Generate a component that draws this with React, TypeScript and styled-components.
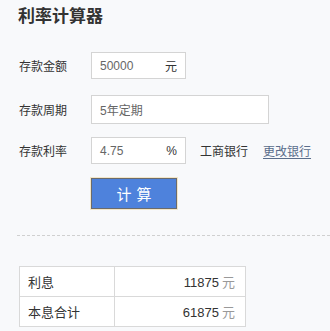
import React from "react";
import styled, { createGlobalStyle } from "styled-components";

const Global = createGlobalStyle`
  html, body { margin: 0; padding: 0; background: #f8f9fb; }
  body { font-family: "Liberation Sans", "Noto Sans CJK SC", sans-serif; color: #333; }
`;

const Page = styled.div`
  width: 330px;
  height: 331px;
  overflow: hidden;
  padding-top: 6px;
  box-sizing: border-box;
`;

const Title = styled.h1`
  margin: 0 0 0 18px;
  font-size: 17px;
  line-height: 22px;
  font-weight: bold;
  color: #333;
`;

const Form = styled.div`
  display: flex;
  flex-direction: column;
  padding-left: 19px;
  margin-top: 24px;
`;

const Row = styled.div<{ $mb: number }>`
  display: flex;
  align-items: center;
  margin-bottom: ${(p) => p.$mb}px;
`;

const Label = styled.div`
  width: 72px;
  font-size: 12px;
  color: #333;
`;

const Field = styled.div<{ $w: number; $h: number }>`
  width: ${(p) => p.$w}px;
  height: ${(p) => p.$h}px;
  box-sizing: border-box;
  border: 1px solid #d4d4d4;
  background: #fff;
  display: flex;
  align-items: center;
  justify-content: space-between;
  padding: 0 8px 0 8px;
  font-size: 12px;
  color: #666;
`;

const Unit = styled.span`
  color: #333;
  font-size: 12px;
`;

const Bank = styled.span`
  margin-left: 14px;
  font-size: 12px;
  color: #333;
`;

const Link = styled.a`
  margin-left: 15px;
  font-size: 12px;
  color: #5a6d8b;
  text-decoration: underline;
  text-underline-offset: 2px;
`;

const Button = styled.button`
  margin-left: 72px;
  width: 86px;
  height: 31px;
  box-sizing: border-box;
  border: 1px solid #6b6b6b;
  box-shadow: 0 0 0 1px #f3e6c8;
  background: #4e82dc;
  color: #fff;
  font-family: "Liberation Sans", "Noto Sans CJK SC", sans-serif;
  font-size: 15px;
  letter-spacing: 5px;
  padding: 0 0 0 5px;
  cursor: pointer;
`;

const Divider = styled.div`
  margin: 26px 0 0 17px;
  border-top: 1px dashed #d0d0d0;
`;

const Table = styled.table`
  margin: 30px 0 0 19px;
  border-collapse: collapse;
  width: 227px;
  background: #fff;
  font-size: 13px;
`;

const Cell = styled.td<{ $right?: boolean }>`
  border: 1px solid #d9d9d9;
  height: 29px;
  padding: 0 ${(p) => (p.$right ? "10px" : "8px")};
  text-align: ${(p) => (p.$right ? "right" : "left")};
  width: ${(p) => (p.$right ? "auto" : "78px")};
  color: #333;
`;

const Yuan = styled.span`
  color: #999;
  margin-left: 3px;
`;

export default function App() {
  return (
    <Page>
      <Global />
      <Title>利率计算器</Title>
      <Form>
        <Row $mb={16}>
          <Label>存款金额</Label>
          <Field $w={95} $h={27}>
            <span>50000</span>
            <Unit>元</Unit>
          </Field>
        </Row>
        <Row $mb={13}>
          <Label>存款周期</Label>
          <Field $w={178} $h={29}>
            <span>5年定期</span>
          </Field>
        </Row>
        <Row $mb={14}>
          <Label>存款利率</Label>
          <Field $w={95} $h={27}>
            <span>4.75</span>
            <Unit>%</Unit>
          </Field>
          <Bank>工商银行</Bank>
          <Link>更改银行</Link>
        </Row>
        <Button>计算</Button>
      </Form>
      <Divider />
      <Table>
        <tbody>
          <tr>
            <Cell>利息</Cell>
            <Cell $right>
              11875<Yuan>元</Yuan>
            </Cell>
          </tr>
          <tr>
            <Cell>本息合计</Cell>
            <Cell $right>
              61875<Yuan>元</Yuan>
            </Cell>
          </tr>
        </tbody>
      </Table>
    </Page>
  );
}
